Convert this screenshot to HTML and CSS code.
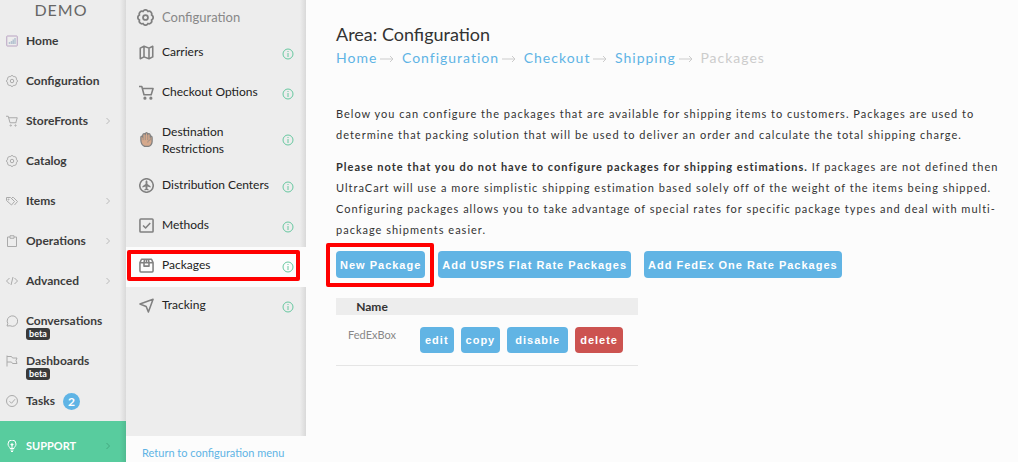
FILE: index.html
```html
<!DOCTYPE html>
<html lang="en">
<head>
    <meta charset="UTF-8">
    <meta name="viewport" content="width=device-width, initial-scale=1.0">
    <title>Packages</title>
    <link rel="stylesheet" href="styles.css">
</head>
<body>

    <!-- Shared icon shapes -->
    <svg class="sprite" aria-hidden="true">
        <symbol id="gear" viewBox="0 0 24 24">
            <path d="M8.500 3.500a3.800 3.800 0 0 1 7 0a3.800 3.800 0 0 1 5 5a3.800 3.800 0 0 1 0 7a3.800 3.800 0 0 1-5 5a3.800 3.800 0 0 1-7 0a3.800 3.800 0 0 1-5-5a3.800 3.800 0 0 1 0-7a3.800 3.800 0 0 1 5-5z"/>
            <circle cx="12" cy="12" r="3.500"/>
        </symbol>
        <symbol id="cart" viewBox="0 0 24 24">
            <path d="M0 2.500h4.500l3.500 13h12.500M5.500 5.500h17l-3 10"/>
            <circle cx="9.500" cy="21" r="1.300"/>
            <circle cx="19" cy="21" r="1.300"/>
        </symbol>
        <symbol id="info" viewBox="0 0 12 12">
            <circle cx="6" cy="6" r="5"/>
            <path d="M6 3v1M6 5v4"/>
        </symbol>
        <symbol id="chevron" viewBox="0 0 6 8">
            <path d="M1.500 1l3 3-3 3"/>
        </symbol>
    </svg>

    <div class="app">

        <!-- Main menu -->
        <nav class="sidebar">
            <div class="brand">DEMO</div>
            <a class="menu-item" href="#">
                <svg class="icon" viewBox="0 0 24 24"><rect class="lilac" x="1.500" y="2" width="21" height="20" rx="1"/><path class="bars" d="M7 18v-4M11 18v-6M14.500 18V9M18 18V6"/></svg>
                <span class="label">Home</span>
            </a>
            <a class="menu-item" href="#">
                <svg class="icon"><use href="#gear"/></svg>
                <span class="label">Configuration</span>
            </a>
            <a class="menu-item" href="#">
                <svg class="icon"><use href="#cart"/></svg>
                <span class="label">StoreFronts</span>
                <svg class="chevron"><use href="#chevron"/></svg>
            </a>
            <a class="menu-item" href="#">
                <svg class="icon"><use href="#gear"/></svg>
                <span class="label">Catalog</span>
            </a>
            <a class="menu-item" href="#">
                <svg class="icon" viewBox="0 0 24 24"><path d="M1 5h8l8 8-6 7L1 11zM12 5h3l8 8-6 7"/><circle cx="5" cy="9" r="1"/></svg>
                <span class="label">Items</span>
                <svg class="chevron"><use href="#chevron"/></svg>
            </a>
            <a class="menu-item" href="#">
                <svg class="icon" viewBox="0 0 24 24"><path d="M8 4H3v19h18V4h-5M8 1.500h8v5H8z"/></svg>
                <span class="label">Operations</span>
                <svg class="chevron"><use href="#chevron"/></svg>
            </a>
            <a class="menu-item" href="#">
                <svg class="icon" viewBox="0 0 24 24"><path d="M7 6l-6 6 6 6M17 6l6 6-6 6M14 4l-4 16"/></svg>
                <span class="label">Advanced</span>
                <svg class="chevron"><use href="#chevron"/></svg>
            </a>
            <a class="menu-item" href="#">
                <svg class="icon" viewBox="0 0 24 24"><path d="M2 22l1.500-5A10.500 10.500 0 1 1 8 21.500z"/></svg>
                <span class="label">Conversations <span class="beta">beta</span></span>
            </a>
            <a class="menu-item" href="#">
                <svg class="icon" viewBox="0 0 24 24"><path d="M2 1v22M2 3h9l2 3h9l-2 5 2 6h-9l-2-3H2"/></svg>
                <span class="label">Dashboards <span class="beta">beta</span></span>
            </a>
            <a class="menu-item" href="#">
                <svg class="icon" viewBox="0 0 24 24"><circle cx="12" cy="12" r="11"/><path d="M7 12.500l4 4 7-8"/></svg>
                <span class="label">Tasks</span>
                <span class="count">2</span>
            </a>
            <a class="menu-item support" href="#">
                <svg class="icon" viewBox="0 0 24 24"><path d="M8 17c0-3-4-4-4-9a8 8 0 0 1 16 0c0 5-4 6-4 9zM9 20h6M10 23h4M12 16v-6M9 9h6M12 6v6"/></svg>
                <span class="label">SUPPORT</span>
                <svg class="chevron"><use href="#chevron"/></svg>
            </a>
        </nav>

        <!-- Configuration menu -->
        <div class="submenu">
            <nav class="submenu-list">
                <div class="submenu-title">
                    <svg class="icon"><use href="#gear"/></svg>
                    <span>Configuration</span>
                </div>
                <a class="submenu-item" href="#">
                    <svg class="icon" viewBox="0 0 24 24"><path d="M2 5l6-3 8 3 6-3v17l-6 3-8-3-6 3zM8 2v17M16 5v17"/></svg>
                    <span class="label">Carriers</span>
                    <svg class="info"><use href="#info"/></svg>
                </a>
                <a class="submenu-item" href="#">
                    <svg class="icon"><use href="#cart"/></svg>
                    <span class="label">Checkout Options</span>
                    <svg class="info"><use href="#info"/></svg>
                </a>
                <a class="submenu-item" href="#">
                    <svg class="icon" viewBox="0 0 24 24"><path class="hand" d="M3 8c0-2 3-2 3 0V5c0-3 4-3 4-1 0-4 4-4 4 0 0-2 4-2 4 1v3c0-2 3-2 3 1v6c0 4-3 8-6 8H9c-4-2-6-6-6-10z"/><path class="thin" d="M6.500 8v5M10 4v9M14 4v9M18 8v5c-3 0-4 2-4 4"/></svg>
                    <span class="label">Destination Restrictions</span>
                    <svg class="info"><use href="#info"/></svg>
                </a>
                <a class="submenu-item" href="#">
                    <svg class="icon" viewBox="0 0 24 24"><circle cx="12" cy="12" r="10.800"/><path class="solid" d="M12 4c1 0 1.500 1 1.500 2v3.500l5 3.500v2l-5-1.500V17l2 1.500V20L12 19l-3.500 1v-1.500l2-1.500v-3.500l-5 1.500v-2l5-3.500V6c0-1 .5-2 1.500-2z"/></svg>
                    <span class="label">Distribution Centers</span>
                    <svg class="info"><use href="#info"/></svg>
                </a>
                <a class="submenu-item" href="#">
                    <svg class="icon" viewBox="0 0 24 24"><rect x="1.500" y="1.500" width="21" height="21" rx="1.500"/><path d="M6.500 12l4 4 7.500-8"/></svg>
                    <span class="label">Methods</span>
                    <svg class="info"><use href="#info"/></svg>
                </a>
                <a class="submenu-item active" href="#">
                    <svg class="icon" viewBox="0 0 24 24"><path d="M1.500 7.500L4 2h16l2.500 5.500v13c0 1-.5 2-1.500 2H3c-1 0-1.500-1-1.500-2zM1.500 7.500h21M8 7.500L9 2M16 7.500L15 2M12 2v6M8 7.500V13h8V7.500"/></svg>
                    <span class="label">Packages</span>
                    <svg class="info"><use href="#info"/></svg>
                    <span class="highlight"></span>
                </a>
                <a class="submenu-item" href="#">
                    <svg class="icon" viewBox="0 0 24 24"><path d="M1.500 9.500L22.500 2 15 22.500l-3.500-9z"/></svg>
                    <span class="label">Tracking</span>
                    <svg class="info"><use href="#info"/></svg>
                </a>
            </nav>
            <a class="return-link" href="#">Return to configuration menu</a>
        </div>

        <!-- Page content -->
        <main class="content">
            <h1>Area: Configuration</h1>
            <div class="breadcrumb">
                <a href="#">Home</a><svg class="arrow" viewBox="0 0 14 8"><path d="M0 4h13M10 1l3 3-3 3"/></svg>
                <a href="#">Configuration</a><svg class="arrow" viewBox="0 0 14 8"><path d="M0 4h13M10 1l3 3-3 3"/></svg>
                <a href="#">Checkout</a><svg class="arrow" viewBox="0 0 14 8"><path d="M0 4h13M10 1l3 3-3 3"/></svg>
                <a href="#">Shipping</a><svg class="arrow" viewBox="0 0 14 8"><path d="M0 4h13M10 1l3 3-3 3"/></svg>
                <span>Packages</span>
            </div>

            <p>Below you can configure the packages that are available for shipping items to customers. Packages are used to determine that packing solution that will be used to deliver an order and calculate the total shipping charge.</p>
            <p><strong>Please note that you do not have to configure packages for shipping estimations.</strong> If packages are not defined then UltraCart will use a more simplistic shipping estimation based solely off of the weight of the items being shipped. Configuring packages allows you to take advantage of special rates for specific package types and deal with multi-package shipments easier.</p>

            <div class="toolbar">
                <div class="marked">
                    <button class="btn" type="button">New Package</button>
                    <span class="highlight"></span>
                </div>
                <button class="btn" type="button">Add USPS Flat Rate Packages</button>
                <button class="btn" type="button">Add FedEx One Rate Packages</button>
            </div>

            <table class="packages">
                <thead>
                    <tr><th>Name</th><td></td></tr>
                </thead>
                <tbody>
                    <tr>
                        <td class="name">FedExBox</td>
                        <td>
                            <div class="actions">
                                <button class="btn" type="button">edit</button>
                                <button class="btn" type="button">copy</button>
                                <button class="btn wide" type="button">disable</button>
                                <button class="btn delete" type="button">delete</button>
                            </div>
                        </td>
                    </tr>
                </tbody>
            </table>
        </main>

    </div>

</body>
</html>
```
FILE: styles.css
```css
/* Global Styles */
* {
    box-sizing: border-box;
}

body {
    margin: 0;
    font-family: Lato, "Liberation Sans", sans-serif;
    font-size: 12px;
    color: #333;
    background: #fcfcfc;
}

a {
    color: #5fb4e5;
    text-decoration: none;
}

svg {
    fill: none;
    stroke: currentColor;
    stroke-linejoin: round;
    flex-shrink: 0;
}

.sprite {
    position: absolute;
    width: 0;
    height: 0;
}

.app {
    display: flex;
    min-height: 100vh;
}

/* Main Menu */
.sidebar {
    display: flex;
    flex-direction: column;
    width: 126px;
    flex-shrink: 0;
    background: linear-gradient(to left, #d9d9d9, #ededed 6px);
}

.brand {
    height: 21px;
    padding-right: 4px;
    font-size: 16px;
    line-height: 19px;
    letter-spacing: 1px;
    text-align: center;
    color: #666;
}

.menu-item {
    display: flex;
    align-items: flex-start;
    height: 40px;
    padding: 13px 15px 0 6px;
    font-weight: bold;
    line-height: 14px;
    color: #3c3c3c;
}

.menu-item .icon {
    width: 12px;
    height: 12px;
    margin: 1px 8px 0 0;
    color: #aaa;
    stroke-width: 2;
}

.lilac {
    stroke: #b9a3c2;
}

.bars {
    stroke: #b5c3d1;
    stroke-width: 3;
}

.chevron {
    width: 6px;
    height: 8px;
    margin: 3px 0 0 auto;
    color: #bbb;
}

.beta {
    display: block;
    width: 24px;
    height: 12px;
    border-radius: 3px;
    background: #3a3a3a;
    color: #fff;
    font-size: 9px;
    line-height: 12px;
    text-align: center;
}

.count {
    width: 17px;
    height: 17px;
    margin: -1px 0 0 8px;
    border-radius: 50%;
    background: #5fb4e5;
    color: #fff;
    line-height: 17px;
    text-align: center;
}

.support {
    flex: 1;
    padding-top: 18px;
    background: linear-gradient(to left, #50bb91, #58cc9e 6px);
    font-size: 11px;
    color: #fff;
}

.support .icon {
    color: #fff;
}

.support .chevron {
    color: #44a880;
}

/* Configuration Menu */
.submenu {
    display: flex;
    flex-direction: column;
    width: 180px;
    flex-shrink: 0;
}

.submenu-list {
    flex: 1;
    background: linear-gradient(to left, #d9d9d9, #ededed 6px);
}

.submenu-title {
    display: flex;
    align-items: center;
    gap: 8px;
    height: 34px;
    padding-left: 11px;
    font-size: 13px;
    color: #888;
}

.submenu-title .icon {
    width: 17px;
    height: 17px;
    color: #808080;
    stroke-width: 2.5;
}

.submenu-item {
    position: relative;
    display: flex;
    align-items: center;
    min-height: 40px;
    padding: 9px 12px 10px;
    line-height: 17px;
    color: #222;
}

.submenu-item .label {
    flex: 1;
    align-self: flex-start;
}

.submenu-item .icon {
    width: 15px;
    height: 15px;
    margin: 0 8px 2px 1px;
    color: #808080;
    stroke-width: 2.5;
}

.submenu-item .info {
    width: 12px;
    height: 12px;
    color: #67c8a0;
}

.submenu-item .hand {
    fill: #d6a98c;
    stroke-width: 2;
}

.submenu-item .thin {
    stroke-width: 1;
}

.submenu-item .solid {
    fill: currentColor;
    stroke: none;
}

.submenu-item.active {
    background: #fcfcfc;
}

.return-link {
    height: 26px;
    padding: 8px 0 0 16px;
    font-size: 11px;
    line-height: 18px;
}

/* Red frame around the marked control */
.highlight {
    position: absolute;
    border: 4px solid #f00;
    border-radius: 2px;
    pointer-events: none;
}

.submenu-item .highlight {
    inset: 3px 6px 6px 1px;
}

/* Page Content */
.content {
    flex: 1;
    min-width: 0;
    padding: 24px 12px 24px 30px;
}

h1 {
    margin: 0 0 2px;
    font-size: 18px;
    font-weight: normal;
    line-height: 20px;
}

.breadcrumb {
    margin-bottom: 33px;
    font-size: 14px;
    line-height: 24px;
    letter-spacing: 1px;
    color: #ccc;
}

.arrow {
    width: 14px;
    height: 8px;
    margin: 0 3px;
}

p {
    margin: 0 0 11px;
    font-size: 11px;
    line-height: 21px;
    letter-spacing: 1px;
}

.toolbar {
    display: flex;
    flex-wrap: wrap;
    gap: 13px;
    margin-bottom: 20px;
}

.marked {
    position: relative;
}

.marked .highlight {
    inset: -8px -9px -9px -10px;
}

/* Buttons */
.btn {
    height: 26px;
    padding: 0 5px;
    border: none;
    border-radius: 4px;
    background: #61b4e4;
    color: #fff;
    font-family: "Liberation Sans", Arial, sans-serif;
    font-size: 11px;
    font-weight: bold;
    letter-spacing: 1px;
    cursor: pointer;
}

.toolbar .btn {
    height: 27px;
    padding: 0 4px;
}

.btn.wide {
    padding: 0 8px;
}

.btn.delete {
    background: #cc5350;
}

/* Packages Table */
.packages {
    width: 302px;
    border-collapse: collapse;
}

.packages thead {
    background: #ededed;
}

.packages th {
    width: 84px;
    padding: 0 12px 0 0;
    line-height: 17px;
}

.packages td {
    padding: 0;
}

.packages tbody tr {
    border-bottom: 1px solid #e5e5e5;
}

.packages tbody td {
    padding: 12px 0;
    vertical-align: top;
}

.packages tbody .name {
    padding-left: 12px;
    font-size: 11px;
    line-height: 16px;
    color: #888;
}

.actions {
    display: flex;
    gap: 7px;
}
```
